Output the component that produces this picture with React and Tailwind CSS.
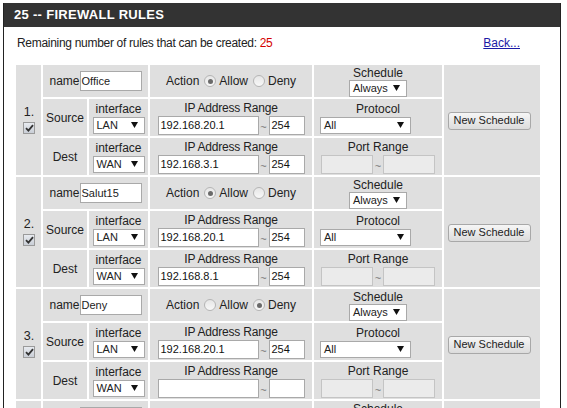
import React from "react";

const rules = [
  { n: 1, name: "Office", allow: true, src: ["192.168.20.1", "254"], dst: ["192.168.3.1", "254"] },
  { n: 2, name: "Salut15", allow: true, src: ["192.168.20.1", "254"], dst: ["192.168.8.1", "254"] },
  { n: 3, name: "Deny", allow: false, src: ["192.168.20.1", "254"], dst: ["", ""] },
  { n: 4, name: "", allow: true, src: ["", ""], dst: ["", ""] },
];

function Arrow() {
  return (
    <svg width="7" height="6" viewBox="0 0 7 6" className="shrink-0">
      <path d="M0 0 H7 L3.5 6 Z" fill="#111" />
    </svg>
  );
}

function FakeSelect({ value, width, extra = "" }) {
  return (
    <div
      className={`flex h-[17px] items-center justify-between border border-[#a9a9a9] bg-white pl-[3px] pr-[6px] text-[11px] leading-none text-[#222] ${width} ${extra}`}
    >
      <span>{value}</span>
      <Arrow />
    </div>
  );
}

function TextBox({ value, width, disabled }) {
  return (
    <div
      className={`flex h-[19px] items-center border pl-[2px] text-[11px] leading-none text-[#111] ${width} ${
        disabled ? "bg-[#ebebeb] border-[#c4c4c4]" : "bg-white border-[#a9a9a9]"
      }`}
    >
      {value}
    </div>
  );
}

function Radio({ on }) {
  return (
    <span className="inline-flex h-[12px] w-[12px] items-center justify-center rounded-full border border-[#b5b5b5] bg-gradient-to-b from-[#e6e6e6] to-[#f8f8f8]">
      {on && <span className="h-[5px] w-[5px] rounded-full bg-[#6a6a6a]" />}
    </span>
  );
}

function Check() {
  return (
    <span className="flex h-[12px] w-[12px] items-center justify-center border border-[#9a9a9a] bg-gradient-to-b from-[#e8ebf0] to-[#c9ced6]">
      <svg width="9" height="8" viewBox="0 0 9 8">
        <path d="M1 4.2 L3.4 6.6 L8 1.2" fill="none" stroke="#333" strokeWidth="1.8" />
      </svg>
    </span>
  );
}

function Range({ a, b, wa, wb, disabled }) {
  return (
    <div className="flex items-center">
      <TextBox value={a} width={wa} disabled={disabled} />
      <span className="w-[10px] pt-[3px] text-center text-[11px] leading-[14px] text-[#777]">~</span>
      <TextBox value={b} width={wb} disabled={disabled} />
    </div>
  );
}

const cell = "bg-[#dfdfdf] p-0 align-middle";

function Rule({ r }) {
  return (
    <>
      <tr className="h-[32px]">
        <td rowSpan={3} className={cell}>
          <div className="flex flex-col items-center gap-[3px] pl-[1px]">
            <span className="text-[12.5px] leading-[13px]">{r.n}.</span>
            <Check />
          </div>
        </td>
        <td colSpan={2} className={cell}>
          <div className="flex items-center justify-center">
            <span className="text-[12px]">name</span>
            <div className="flex h-[20px] w-[62px] items-center border border-[#a9a9a9] bg-white pl-[1px] text-[11px] leading-none">
              {r.name}
            </div>
          </div>
        </td>
        <td className={cell}>
          <div className="flex items-center justify-center text-[12px]">
            <span>Action</span>
            <span className="ml-[5px] flex"><Radio on={r.allow} /></span>
            <span className="ml-[3px]">Allow</span>
            <span className="ml-[5px] flex"><Radio on={!r.allow} /></span>
            <span className="ml-[3px]">Deny</span>
          </div>
        </td>
        <td className={cell}>
          <div className="flex flex-col items-center">
            <span className="text-[12px] leading-[14px]">Schedule</span>
            <FakeSelect value="Always" width="w-[58px]" />
          </div>
        </td>
        <td rowSpan={3} className={cell}>
          <div className="flex justify-center pr-[6px] pt-[1px]">
            <button className="h-[18px] w-[83px] rounded-[3px] border border-[#a8a8a8] bg-gradient-to-b from-[#f6f6f6] to-[#dcdcdc] text-[11px] leading-none text-[#222]">
              New Schedule
            </button>
          </div>
        </td>
      </tr>
      <tr className="h-[37px]">
        <td className={cell}>
          <div className="text-center text-[12px]">Source</div>
        </td>
        <td className={cell}>
          <div className="flex flex-col items-center">
            <span className="text-[12px] leading-[15px]">interface</span>
            <FakeSelect value="LAN" width="w-[52px]" />
          </div>
        </td>
        <td className={cell}>
          <div className="flex flex-col items-center">
            <span className="text-[12px] leading-[15px] tracking-[-0.2px]">IP Address Range</span>
            <Range a={r.src[0]} b={r.src[1]} wa="w-[101px]" wb="w-[36px]" />
          </div>
        </td>
        <td className={cell}>
          <div className="flex flex-col items-center">
            <span className="text-[12px] leading-[15px]">Protocol</span>
            <FakeSelect value="All" width="w-[91px]" extra="self-start ml-[6px]" />
          </div>
        </td>
      </tr>
      <tr className="h-[37px]">
        <td className={cell}>
          <div className="text-center text-[12px]">Dest</div>
        </td>
        <td className={cell}>
          <div className="flex flex-col items-center">
            <span className="text-[12px] leading-[15px]">interface</span>
            <FakeSelect value="WAN" width="w-[52px]" />
          </div>
        </td>
        <td className={cell}>
          <div className="flex flex-col items-center">
            <span className="text-[12px] leading-[15px] tracking-[-0.2px]">IP Address Range</span>
            <Range a={r.dst[0]} b={r.dst[1]} wa="w-[101px]" wb="w-[36px]" />
          </div>
        </td>
        <td className={cell}>
          <div className="flex flex-col items-center">
            <span className="text-[12px] leading-[15px]">Port Range</span>
            <Range a="" b="" wa="w-[52px]" wb="w-[52px]" disabled />
          </div>
        </td>
      </tr>
    </>
  );
}

export default function App() {
  return (
    <div className="h-[408px] overflow-hidden bg-white pt-[3px] font-['Liberation_Sans',Arial,sans-serif] text-[#222]">
      <div className="ml-[3px] w-[558px] border-x border-[#222] pb-[40px]">
        <div className="flex h-[24px] items-center bg-[#333333] pl-[10px] text-[13px] font-bold tracking-[0.3px] text-white">
          25 -- FIREWALL RULES
        </div>
        <div className="flex h-[36px] items-center pb-[4px] text-[12px]">
          <span className="pl-[13px] tracking-[-0.3px]">
            Remaining number of rules that can be created: <span className="text-[#d40000]">25</span>
          </span>
          <a href="#" className="ml-auto mr-[40px] text-[#1a1aa6] underline">
            Back...
          </a>
        </div>
        <table className="ml-[10px] table-fixed border-separate border-spacing-[2px] bg-white">
          <colgroup>
            <col className="w-[25px]" />
            <col className="w-[44px]" />
            <col className="w-[59px]" />
            <col className="w-[162px]" />
            <col className="w-[128px]" />
            <col className="w-[96px]" />
          </colgroup>
          <tbody>
            {rules.map((r) => (
              <Rule key={r.n} r={r} />
            ))}
          </tbody>
        </table>
      </div>
    </div>
  );
}
